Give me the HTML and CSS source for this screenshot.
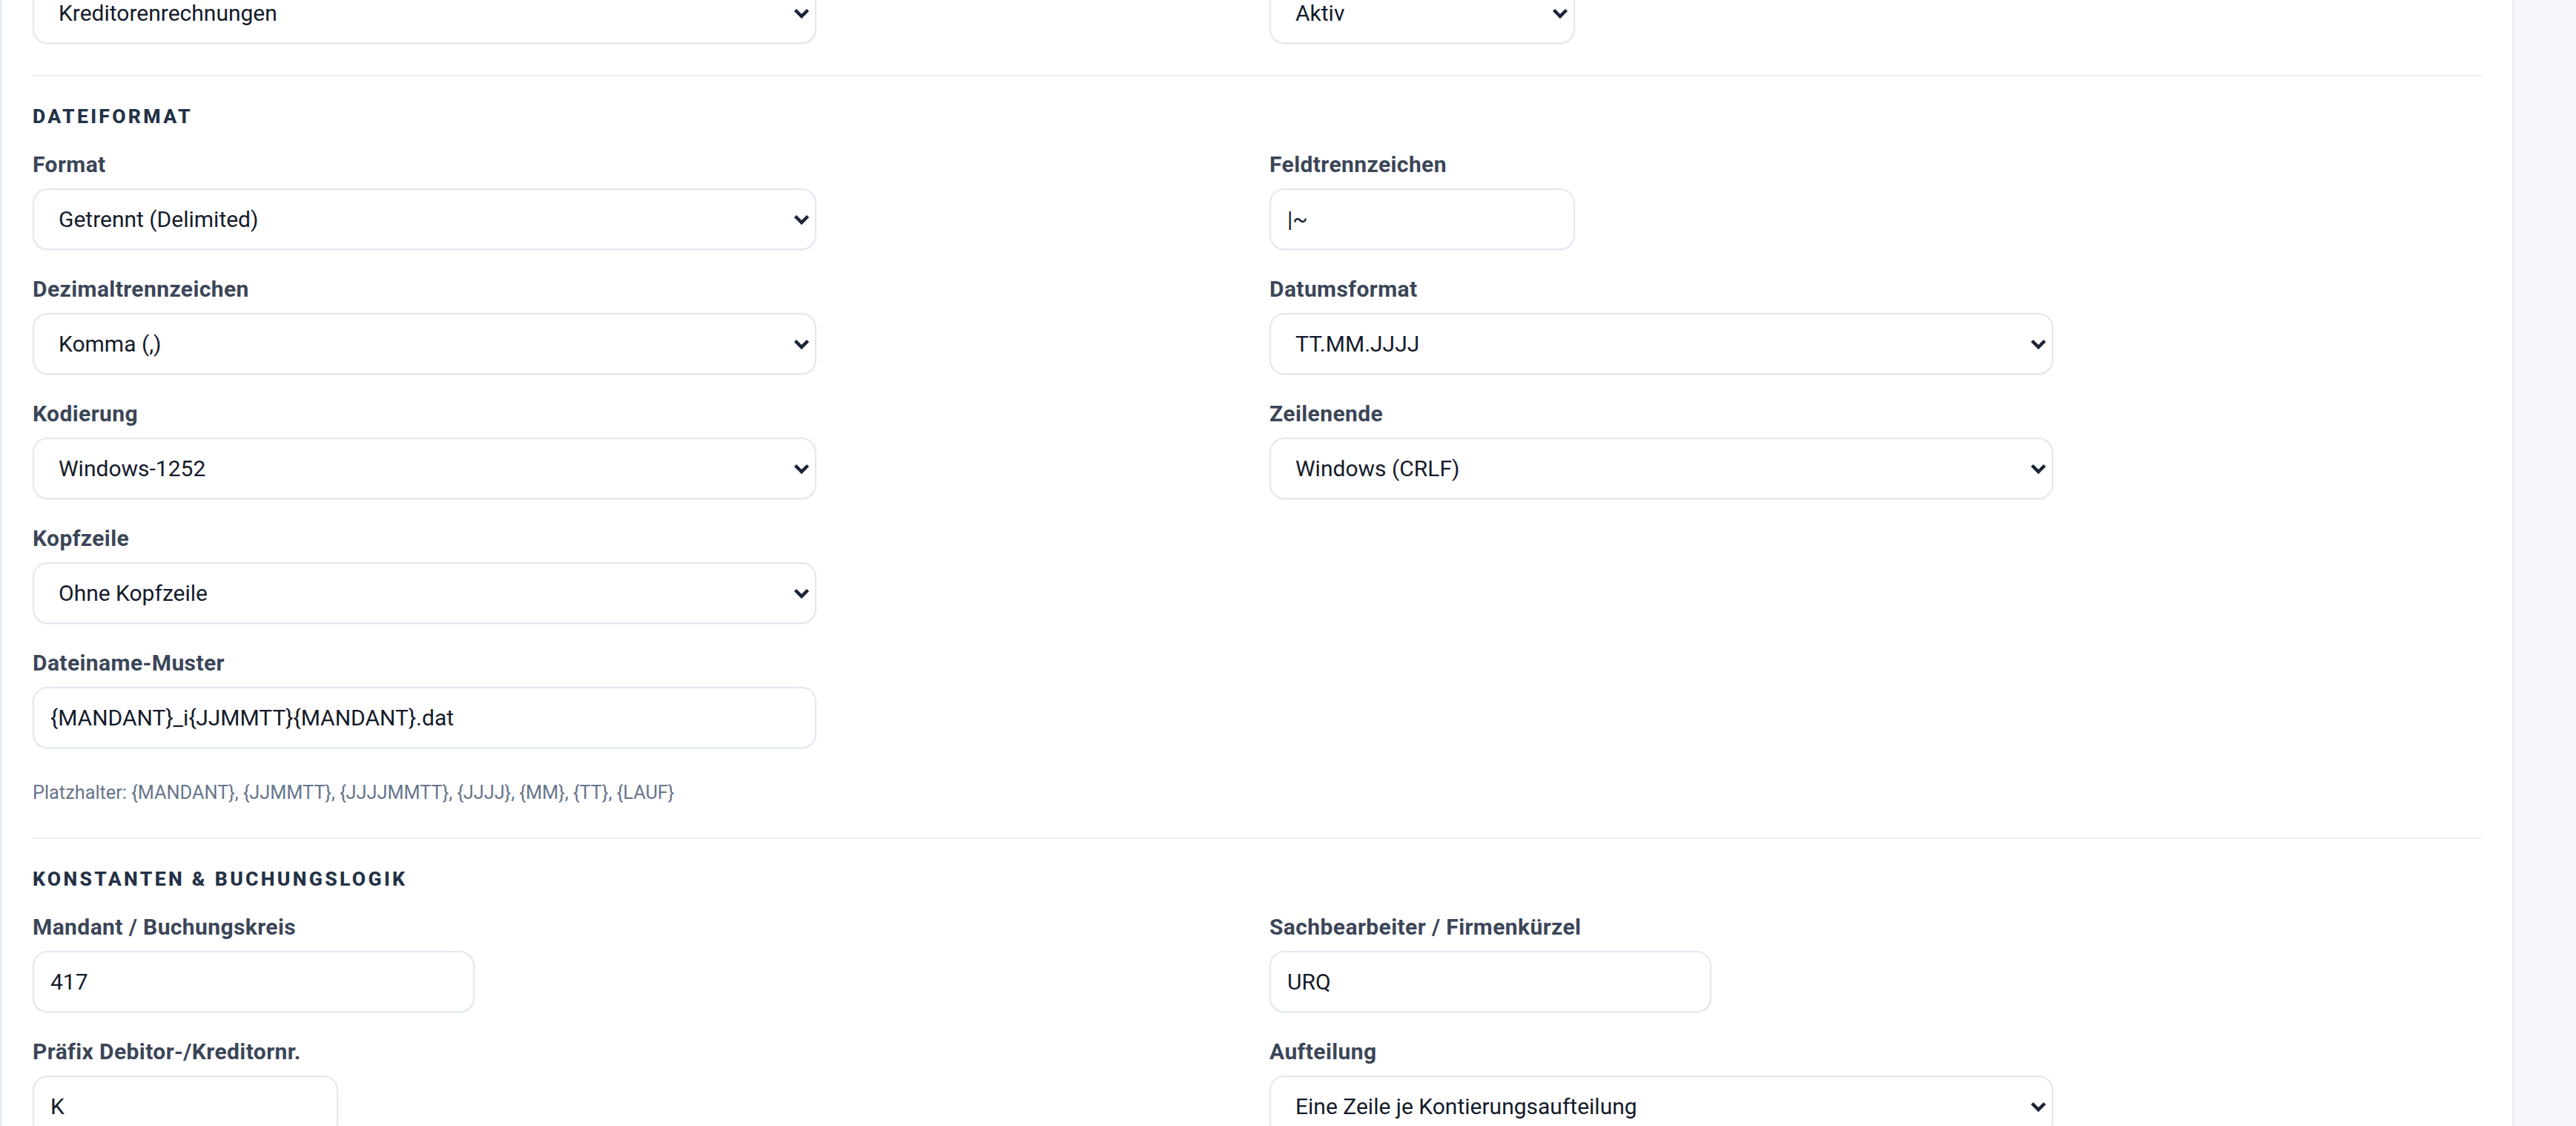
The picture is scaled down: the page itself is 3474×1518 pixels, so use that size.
FILE: index.html
```html
<!DOCTYPE html>
<html lang="de">
<head>
    <meta charset="UTF-8">
    <meta name="viewport" content="width=device-width, initial-scale=1.0">
    <title>Exportprofil bearbeiten</title>

    <link rel="stylesheet" href="styles.css">
</head>

<body>

    <main class="card">

        <section class="section section-top">
            <div class="grid">
                <div class="field">
                    <div class="select-wrap wide">
                        <select class="control">
                            <option>Kreditorenrechnungen</option>
                        </select>
                        <svg class="chevron" viewBox="0 0 22 14"><path d="M2.5 2.5L11 11l8.5-8.5"/></svg>
                    </div>
                </div>
                <div class="field">
                    <div class="select-wrap short">
                        <select class="control">
                            <option>Aktiv</option>
                        </select>
                        <svg class="chevron" viewBox="0 0 22 14"><path d="M2.5 2.5L11 11l8.5-8.5"/></svg>
                    </div>
                </div>
            </div>
        </section>

        <section class="section">
            <h2 class="section-title">Dateiformat</h2>

            <div class="grid">
                <div class="field">
                    <label>Format</label>
                    <div class="select-wrap wide">
                        <select class="control">
                            <option>Getrennt (Delimited)</option>
                        </select>
                        <svg class="chevron" viewBox="0 0 22 14"><path d="M2.5 2.5L11 11l8.5-8.5"/></svg>
                    </div>
                </div>
                <div class="field">
                    <label>Feldtrennzeichen</label>
                    <input class="control text short" type="text" value="|~">
                </div>

                <div class="field">
                    <label>Dezimaltrennzeichen</label>
                    <div class="select-wrap wide">
                        <select class="control">
                            <option>Komma (,)</option>
                        </select>
                        <svg class="chevron" viewBox="0 0 22 14"><path d="M2.5 2.5L11 11l8.5-8.5"/></svg>
                    </div>
                </div>
                <div class="field">
                    <label>Datumsformat</label>
                    <div class="select-wrap wide">
                        <select class="control">
                            <option>TT.MM.JJJJ</option>
                        </select>
                        <svg class="chevron" viewBox="0 0 22 14"><path d="M2.5 2.5L11 11l8.5-8.5"/></svg>
                    </div>
                </div>

                <div class="field">
                    <label>Kodierung</label>
                    <div class="select-wrap wide">
                        <select class="control">
                            <option>Windows-1252</option>
                        </select>
                        <svg class="chevron" viewBox="0 0 22 14"><path d="M2.5 2.5L11 11l8.5-8.5"/></svg>
                    </div>
                </div>
                <div class="field">
                    <label>Zeilenende</label>
                    <div class="select-wrap wide">
                        <select class="control">
                            <option>Windows (CRLF)</option>
                        </select>
                        <svg class="chevron" viewBox="0 0 22 14"><path d="M2.5 2.5L11 11l8.5-8.5"/></svg>
                    </div>
                </div>

                <div class="field">
                    <label>Kopfzeile</label>
                    <div class="select-wrap wide">
                        <select class="control">
                            <option>Ohne Kopfzeile</option>
                        </select>
                        <svg class="chevron" viewBox="0 0 22 14"><path d="M2.5 2.5L11 11l8.5-8.5"/></svg>
                    </div>
                </div>

                <div class="field field-left">
                    <label>Dateiname-Muster</label>
                    <input class="control text wide" type="text" value="{MANDANT}_i{JJMMTT}{MANDANT}.dat">
                </div>
            </div>

            <p class="hint">Platzhalter: {MANDANT}, {JJMMTT}, {JJJJMMTT}, {JJJJ}, {MM}, {TT}, {LAUF}</p>
        </section>

        <section class="section">
            <h2 class="section-title">Konstanten &amp; Buchungslogik</h2>

            <div class="grid">
                <div class="field">
                    <label>Mandant / Buchungskreis</label>
                    <input class="control text medium" type="text" value="417">
                </div>
                <div class="field">
                    <label>Sachbearbeiter / Firmenkürzel</label>
                    <input class="control text medium" type="text" value="URQ">
                </div>

                <div class="field">
                    <label>Präfix Debitor-/Kreditornr.</label>
                    <input class="control text short" type="text" value="K">
                </div>
                <div class="field">
                    <label>Aufteilung</label>
                    <div class="select-wrap wide">
                        <select class="control">
                            <option>Eine Zeile je Kontierungsaufteilung</option>
                        </select>
                        <svg class="chevron" viewBox="0 0 22 14"><path d="M2.5 2.5L11 11l8.5-8.5"/></svg>
                    </div>
                </div>
            </div>
        </section>

    </main>

</body>
</html>
```

FILE: styles.css
```css
*{
    box-sizing: border-box;
    margin: 0;
    padding: 0;
}

body{
    height: 100vh;
    overflow: hidden;
    display: flex;
    font-family: Roboto, "Liberation Sans", Arial, sans-serif;
    background: linear-gradient(to right, #edf1f6, #f5f7fa);
}

.card{
    width: 3390px;
    background: #fff;
    border-left: 2px solid #e1e8f1;
    border-right: 2px solid #e6ecf3;
    padding: 0 41px 0 42px;
}

/* sections */
.section{
    padding: 36px 0 42px;
}
.section + .section{
    border-top: 2px solid #eaeff5;
}
.section-top{
    margin-top: -24px;
    padding-top: 0;
}

.section-title{
    font-size: 26.6px;
    line-height: 36px;
    font-weight: 800;
    letter-spacing: 3.3px;
    text-transform: uppercase;
    color: #243246;
    margin-bottom: 29px;
}

/* two column form */
.grid{
    display: grid;
    grid-template-columns: 1fr 1fr;
    column-gap: 33px;
    row-gap: 35px;
}
.field{
    display: flex;
    flex-direction: column;
    align-items: flex-start;
}
.field-left{
    grid-column: 1;
}
.field label{
    font-size: 30px;
    line-height: 36px;
    font-weight: 700;
    letter-spacing: 0.4px;
    color: #3b4658;
    margin-bottom: 14px;
}

/* inputs and selects */
.control{
    height: 83px;
    width: 100%;
    border: 2px solid #e2e8f0;
    border-radius: 20px;
    background: #fff;
    box-shadow: 0 1px 2px rgba(30, 41, 59, 0.06);
    font-family: inherit;
    font-size: 30px;
    color: #141b2b;
    outline: none;
}
select.control{
    appearance: none;
    padding: 0 48px 0 33px;
}
.control.text{
    padding: 0 22px;
}

.wide{
    width: 1057px;
}
.medium{
    width: 596px;
}
.short{
    width: 412px;
}

.select-wrap{
    position: relative;
}
.chevron{
    position: absolute;
    right: 9px;
    top: 50%;
    width: 22px;
    height: 14px;
    transform: translateY(-50%);
    pointer-events: none;
}
.chevron path{
    fill: none;
    stroke: #1c2537;
    stroke-width: 4.5;
}

.hint{
    margin-top: 42px;
    font-size: 25.3px;
    line-height: 36px;
    color: #66758c;
}
```
